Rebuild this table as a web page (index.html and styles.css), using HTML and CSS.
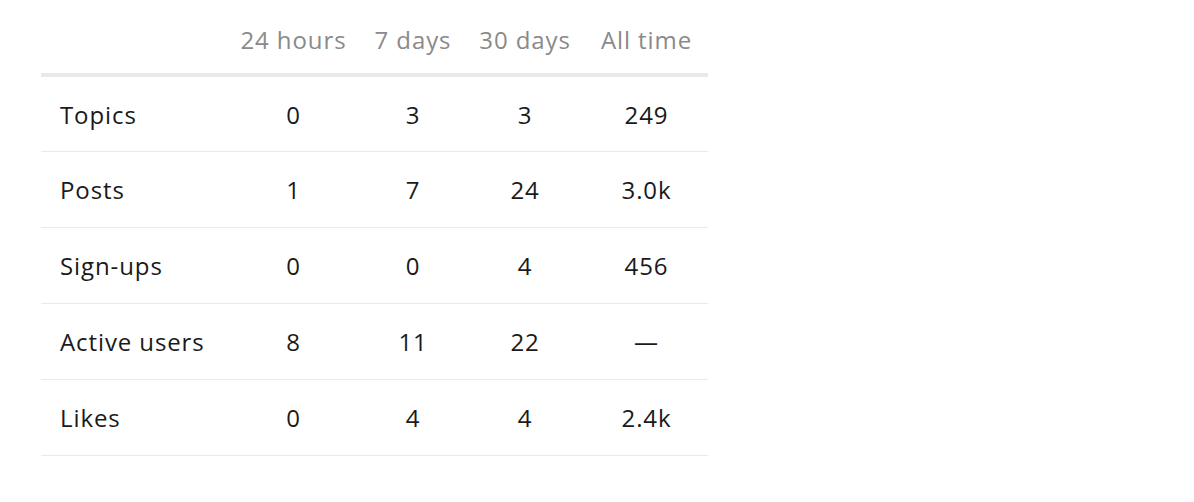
FILE: index.html
```html
<!DOCTYPE html>
<html>
<head>
<meta charset="utf-8">
<link rel="stylesheet" href="styles.css">
</head>
<body>
<table class="stats">
  <colgroup>
    <col class="c-label">
    <col class="c-day">
    <col class="c-week">
    <col class="c-month">
    <col class="c-all">
  </colgroup>
  <thead>
    <tr>
      <th></th>
      <th>24 hours</th>
      <th>7 days</th>
      <th>30 days</th>
      <th>All time</th>
    </tr>
  </thead>
  <tbody>
    <tr><td class="label">Topics</td><td>0</td><td>3</td><td>3</td><td>249</td></tr>
    <tr><td class="label">Posts</td><td>1</td><td>7</td><td>24</td><td>3.0k</td></tr>
    <tr><td class="label">Sign-ups</td><td>0</td><td>0</td><td>4</td><td>456</td></tr>
    <tr><td class="label">Active users</td><td>8</td><td>11</td><td>22</td><td>—</td></tr>
    <tr><td class="label">Likes</td><td>0</td><td>4</td><td>4</td><td>2.4k</td></tr>
  </tbody>
</table>
</body>
</html>
```
FILE: styles.css
```css
html, body {
  margin: 0;
  padding: 0;
  background: #fff;
}
body {
  font-family: "Open Sans", "Liberation Sans", sans-serif;
  color: #1a1a1a;
}
.stats {
  margin-left: 41px;
  border-collapse: collapse;
  table-layout: fixed;
  width: 667px;
}
.c-label { width: 185px; }
.c-day { width: 135px; }
.c-week { width: 104px; }
.c-month { width: 120px; }
.c-all { width: 123px; }
.stats th {
  font-weight: normal;
  color: #8a8a8a;
  font-size: 24px;
  line-height: 30px;
  height: 75px;
  padding: 0 0 18px 0;
  vertical-align: bottom;
  text-align: center;
  box-sizing: border-box;
  border-bottom: 4px solid #e9e9e9;
  white-space: nowrap;
  letter-spacing: 0.9px;
}
.stats td {
  font-size: 24px;
  line-height: 30px;
  height: 76px;
  padding: 2px 0 0 0;
  text-align: center;
  vertical-align: middle;
  border-bottom: 1px solid #e9e9e9;
  box-sizing: border-box;
  white-space: nowrap;
  letter-spacing: 0.9px;
}
.stats td.label {
  text-align: left;
  padding-left: 19px;
}
```
